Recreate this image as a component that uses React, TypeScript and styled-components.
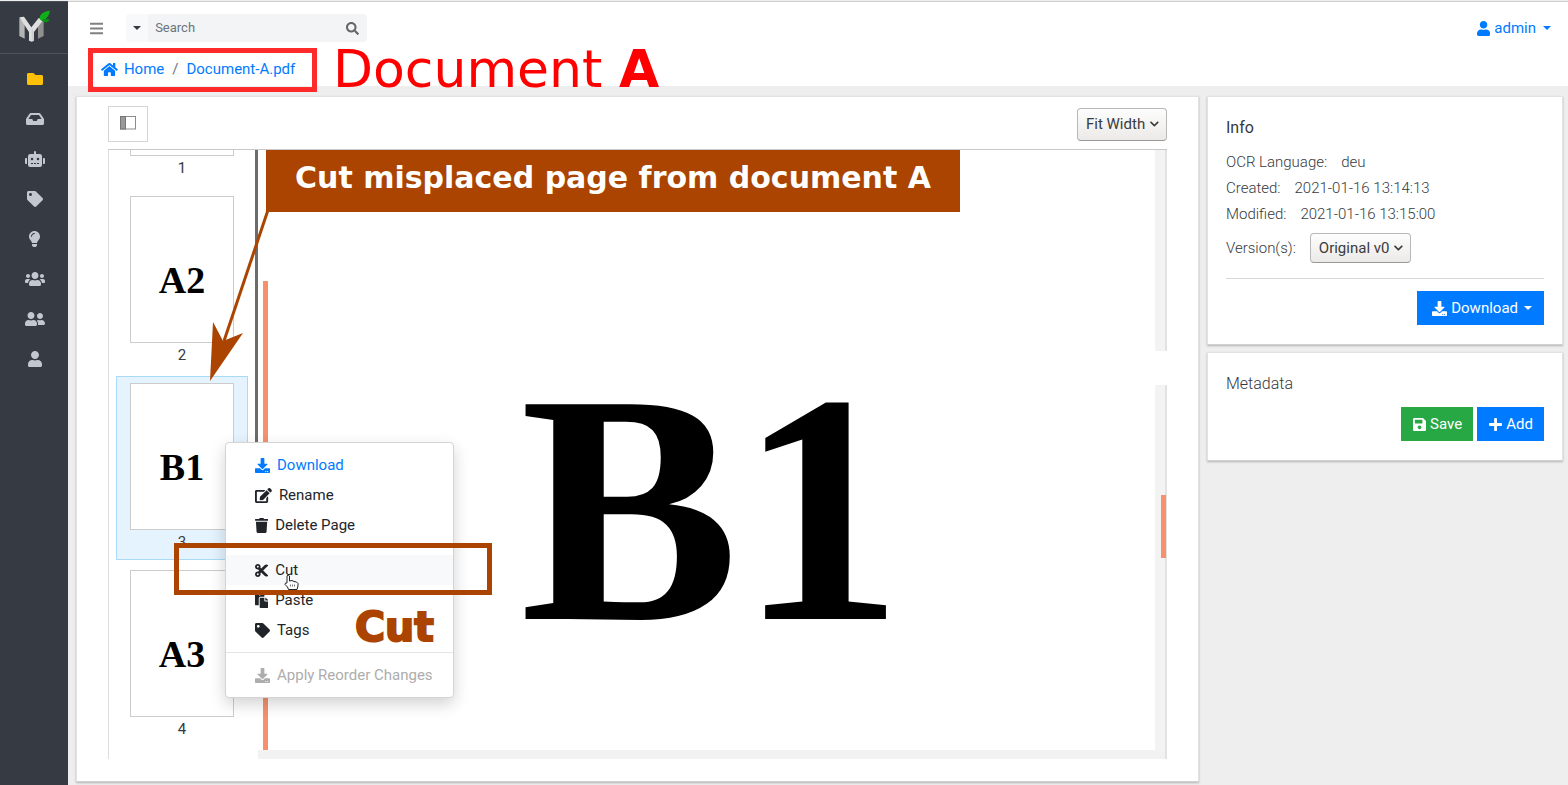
import React from "react";
import styled, { createGlobalStyle, css } from "styled-components";
import {
  FaBars,
  FaChevronDown,
  FaCut,
  FaDownload,
  FaEdit,
  FaFolder,
  FaHome,
  FaInbox,
  FaLightbulb,
  FaPaste,
  FaPlus,
  FaRobot,
  FaSave,
  FaSearch,
  FaTag,
  FaTrash,
  FaUser,
  FaUserFriends,
  FaUsers,
} from "react-icons/fa";

const blue = "#007bff";
const rust = "#aa4400";
const salmon = "#f6916c";

/* Font Awesome glyphs keep their own width-to-height ratio. */
const GlobalStyle = createGlobalStyle`
  *, *::before, *::after { box-sizing: border-box; }
  body {
    margin: 0;
    background: #eee;
    color: #343a40;
    font: 400 15px/24px Roboto, "Liberation Sans", sans-serif;
  }
  button, input, select { font: inherit; color: inherit; }
  button { cursor: pointer; }
  a { color: ${blue}; text-decoration: none; }
  svg { display: block; flex: none; }
  svg[viewBox="0 0 640 512"] { width: 1.25em; }
  svg[viewBox="0 0 576 512"] { width: 1.125em; }
  svg[viewBox="0 0 448 512"] { width: 0.875em; }
  svg[viewBox="0 0 352 512"] { width: 0.6875em; }
`;

const Page = styled.div`
  position: relative;
  display: grid;
  grid-template-columns: 68px minmax(0, 1fr);
  min-height: 100vh;
  border-top: 1px solid #eee;
`;

/* Sidebar */

const Sidebar = styled.aside`
  background: #353a43;
  border-top: 1px solid #4b5058;
`;

const Brand = styled.a`
  display: flex;
  justify-content: center;
  height: 52px;
  padding-top: 8px;
  border-bottom: 1px solid #4d525b;
`;

const SideNav = styled.nav`
  display: flex;
  flex-direction: column;
  padding-top: 5px;
`;

const SideLink = styled.a<{ $active?: boolean }>`
  display: flex;
  align-items: center;
  justify-content: center;
  height: 40px;
  padding-left: 1px;
  color: ${(p) => (p.$active ? "#ffc107" : "#c2c7d0")};
  font-size: 16px;
`;

/* Header */

const Content = styled.div`
  display: flex;
  flex-direction: column;
  min-width: 0;
`;

const Header = styled.header`
  height: 85px;
  padding: 12px 17px 0 22px;
  background: #fff;
  border-top: 1px solid #d0d0d0;
`;

const TopBar = styled.div`
  display: flex;
  align-items: center;
  height: 28px;
`;

const PlainButton = styled.button`
  display: flex;
  align-items: center;
  padding: 0;
  border: 0;
  background: none;
`;

const MenuToggle = styled(PlainButton)`
  margin-right: 23px;
  color: #808080;
`;

const SearchGroup = styled.form`
  display: flex;
  width: 241px;
  height: 28px;
  border-radius: 4px;
  overflow: hidden;
  background: #f2f4f6;
`;

const SearchScope = styled(PlainButton)`
  justify-content: center;
  width: 22px;
  background: #f8f9fa;
`;

const SearchInput = styled.input`
  flex: 1;
  min-width: 0;
  padding: 0 7px;
  border: 0;
  background: none;
  font-size: 13px;
  &::placeholder { color: #6c757d; opacity: 1; }
`;

const SearchButton = styled(PlainButton)`
  padding-right: 8px;
  color: #666;
  font-size: 13px;
`;

const Caret = styled.span`
  border: solid transparent;
  border-width: 4px 4px 0;
  border-top-color: currentColor;
`;

const UserMenu = styled(PlainButton)`
  gap: 4px;
  margin-left: auto;
  color: ${blue};
  ${Caret} { margin-left: 3px; }
`;

const Breadcrumb = styled.nav`
  display: flex;
  align-items: center;
  gap: 8px;
  height: 24px;
  margin: 15px 0 0 11px;
  a { display: flex; align-items: center; gap: 6px; }
`;

const Slash = styled.span`
  color: #6c757d;
`;

/* Cards */

const Columns = styled.main`
  flex: 1;
  display: grid;
  grid-template-columns: minmax(0, 1fr) 356px;
  gap: 8px;
  padding: 10px 5px 3px 8px;
`;

const cardLook = css`
  background: #fff;
  border: 1px solid #e2e2e2;
  border-bottom-color: #d0d0d0;
  box-shadow: 0 1px 2px rgba(0, 0, 0, 0.25);
`;

const ViewerCard = styled.section`
  ${cardLook}
  display: flex;
  flex-direction: column;
  padding: 9px 31px 22px;
`;

const SideCards = styled.div`
  display: flex;
  flex-direction: column;
  gap: 7px;
`;

const Card = styled.section`
  ${cardLook}
  padding: 18px 18px 19px;
`;

/* Viewer */

const ViewerToolbar = styled.div`
  display: flex;
  align-items: center;
  justify-content: space-between;
  height: 36px;
  margin-bottom: 7px;
`;

const PanelToggle = styled.button`
  display: flex;
  align-items: center;
  justify-content: center;
  width: 40px;
  height: 36px;
  padding: 0 0 3px;
  background: #fff;
  border: 1px solid #d5d5d5;
`;

const SelectBox = styled.span<{ $height: number }>`
  display: inline-grid;
  align-items: center;
  height: ${(p) => p.$height}px;
  border: 1px solid #b8b8b8;
  border-bottom-color: #999;
  border-radius: 4px;
  background: linear-gradient(#fdfdfd, #eceae8);
  color: #3b3b3b;
  select, svg { grid-area: 1 / 1; }
  select {
    height: 100%;
    padding: 0 20px 0 8px;
    border: 0;
    background: none;
    appearance: none;
  }
  svg {
    justify-self: end;
    margin-right: 7px;
    font-size: 10px;
    pointer-events: none;
  }
`;

const Viewer = styled.div`
  flex: 1;
  display: flex;
  height: 610px;
  border-left: 1px solid #ddd;
  border-top: 1px solid #c8c8c8;
  overflow: hidden;
`;

const ThumbPane = styled.div`
  width: 146px;
  height: 609px;
  overflow: hidden;
`;

const ThumbList = styled.ol`
  display: flex;
  flex-direction: column;
  gap: 3px;
  margin: -148px 0 0 7px;
  padding: 0;
  list-style: none;
`;

const ThumbItem = styled.li<{ $selected?: boolean }>`
  display: flex;
  flex-direction: column;
  align-items: center;
  width: 132px;
  height: 184px;
  padding-top: 6px;
  border: 1px solid ${(p) => (p.$selected ? "#a8dbf8" : "transparent")};
  background: ${(p) => (p.$selected ? "#e5f3fe" : "none")};
`;

const ThumbPage = styled.div`
  width: 104px;
  height: 147px;
  padding-top: 64px;
  background: #fff;
  border: 1px solid #ccc;
  color: #000;
  font: 700 38px/38px "Liberation Serif", serif;
  text-align: center;
`;

const Splitter = styled.div`
  width: 3px;
  height: 420px;
  background: #6c6c6c;
`;

const Stage = styled.div`
  flex: 1;
  display: flex;
  flex-direction: column;
  min-width: 0;
`;

const StageRow = styled.div`
  flex: 1;
  display: flex;
  min-height: 0;
`;

const PageMarker = styled.div`
  width: 5px;
  margin: 131px 0 0 5px;
  background: ${salmon};
`;

const DocumentPage = styled.div`
  flex: 1;
  padding-top: 195px;
  color: #000;
  font: 700 328px/328px "Liberation Serif", serif;
  text-align: center;
`;

const VerticalScroll = styled.div`
  display: flex;
  flex-direction: column;
  gap: 34px;
  width: 12px;
`;

const Track = styled.div<{ $length?: number }>`
  flex: ${(p) => (p.$length ? `0 0 ${p.$length}px` : "1")};
  background: #f3f3f3;
  border-right: 2px solid #e2e2e2;
`;

const TrackThumb = styled.div`
  width: 5px;
  height: 63px;
  margin: 110px 0 0 6px;
  background: ${salmon};
`;

const HorizontalScroll = styled.div`
  height: 9px;
  background: #f2f2f2;
  border-right: 2px solid #e2e2e2;
`;

/* Info cards */

const CardTitle = styled.h2<{ $light?: boolean }>`
  margin: 0 0 ${(p) => (p.$light ? 10 : 8)}px;
  font-size: 16px;
  line-height: 26px;
  font-weight: ${(p) => (p.$light ? 300 : 400)};
`;

const Facts = styled.dl`
  margin: 0;
  font-weight: 300;
  line-height: 26px;
`;

const Fact = styled.div`
  display: flex;
  gap: 14px;
  dd { margin: 0; }
`;

const VersionRow = styled.div`
  display: flex;
  align-items: center;
  gap: 14px;
  margin-top: 6px;
  padding-bottom: 15px;
  border-bottom: 1px solid #d8d8d8;
  label { font-weight: 300; }
`;

const Actions = styled.div<{ $spaced?: boolean }>`
  display: flex;
  justify-content: flex-end;
  gap: 4px;
  margin-top: ${(p) => (p.$spaced ? 12 : 0)}px;
`;

const ActionButton = styled.button<{ $tone: string; $wide?: boolean }>`
  display: flex;
  align-items: center;
  gap: 4px;
  height: 34px;
  padding: 0 ${(p) => (p.$wide ? 12 : 11)}px 0 ${(p) => (p.$wide ? 15 : 12)}px;
  border: 0;
  background: ${(p) => p.$tone};
  color: #fff;
  ${Caret} { margin-left: 2px; }
`;

/* Context menu */

const ContextMenu = styled.div`
  position: absolute;
  left: 225px;
  top: 441px;
  width: 229px;
  padding: 7px 0;
  background: #fff;
  border: 1px solid #d4d4d4;
  border-radius: 4px;
  box-shadow: 0 6px 16px rgba(0, 0, 0, 0.18);
`;

const MenuItem = styled.button<{ $tone?: "primary" | "hover" }>`
  display: flex;
  align-items: center;
  gap: 7px;
  width: 100%;
  height: 30px;
  padding: 0 0 0 29px;
  border: 0;
  background: ${(p) => (p.$tone === "hover" ? "#f8f9fa" : "none")};
  color: ${(p) => (p.$tone === "primary" ? blue : "#212529")};
  white-space: nowrap;
  &:disabled { color: #adadad; }
`;

const MenuDivider = styled.hr`
  height: 1px;
  margin: 7px 0;
  border: 0;
  background: #e4e4e4;
`;

/* Annotations drawn over the page */

const Frame = styled.div<{ $color: string }>`
  position: absolute;
  border: 5px solid ${(p) => p.$color};
  pointer-events: none;
`;

const BreadcrumbFrame = styled(Frame)`
  left: 88px;
  top: 47px;
  width: 229px;
  height: 44px;
`;

const CutFrame = styled(Frame)`
  left: 174px;
  top: 542px;
  width: 318px;
  height: 52px;
`;

const DocumentNote = styled.div`
  position: absolute;
  left: 333px;
  top: 38px;
  color: #f00;
  font: 400 52px/60px "DejaVu Sans", sans-serif;
  white-space: nowrap;
`;

const Callout = styled.div`
  position: absolute;
  left: 266px;
  top: 149px;
  width: 694px;
  height: 62px;
  background: ${rust};
  color: #fff;
  font: 700 30px/56px "DejaVu Sans", sans-serif;
  text-align: center;
  white-space: nowrap;
`;

const Arrow = styled.svg`
  position: absolute;
  left: 200px;
  top: 209px;
  pointer-events: none;
`;

const CutNote = styled.div`
  position: absolute;
  left: 355px;
  top: 602px;
  color: ${rust};
  font: 700 41px/48px "DejaVu Sans", sans-serif;
  -webkit-text-stroke: 2px ${rust};
`;

const Pointer = styled.svg`
  position: absolute;
  left: 283px;
  top: 572px;
  pointer-events: none;
`;

const Logo = () => (
  <svg width="32" height="32" viewBox="0 0 96 96" aria-hidden="true">
    <path d="M4 24 20 38V86L4 78Z" fill="#b4b4b4" />
    <path d="M60 38 77 30V78L60 86Z" fill="#8f8f8f" />
    <path d="M4 22 18 20 40 52 62 24 76 30 48 66V92L41 95 33 92V66Z" fill="#dedede" />
    <path d="M41 52 48 66V92L41 95Z" fill="#c4c4c4" opacity=".6" />
    <path d="M96 2C78 4 65 11 65 24Q65 29 69 31C79 30 92 24 96 2Z" fill="#0fae1a" />
    <path d="M69 31Q84 24 96 30Q84 44 69 31Z" fill="#079311" />
  </svg>
);

const PanelIcon = () => (
  <svg width="16" height="14" viewBox="0 0 16 14" aria-hidden="true">
    <rect x="0.5" y="0.5" width="15" height="12.5" fill="#fff" stroke="#8c8c8c" />
    <rect x="0.5" y="0.5" width="5" height="12.5" fill="#999" stroke="#777" />
  </svg>
);

const sideLinks = [
  { label: "Folders", icon: <FaFolder /> },
  { label: "Inbox", icon: <FaInbox /> },
  { label: "Automation", icon: <FaRobot /> },
  { label: "Tags", icon: <FaTag /> },
  { label: "Hints", icon: <FaLightbulb /> },
  { label: "Groups", icon: <FaUsers /> },
  { label: "Roles", icon: <FaUserFriends /> },
  { label: "User", icon: <FaUser /> },
];

const thumbs = ["A1", "A2", "B1", "A3"];

export default function App() {
  return (
    <>
      <GlobalStyle />
      <Page>
        <Sidebar>
          <Brand href="#" aria-label="Start page">
            <Logo />
          </Brand>
          <SideNav>
            {sideLinks.map((link, i) => (
              <SideLink key={link.label} href="#" aria-label={link.label} $active={i === 0}>
                {link.icon}
              </SideLink>
            ))}
          </SideNav>
        </Sidebar>

        <Content>
          <Header>
            <TopBar>
              <MenuToggle aria-label="Toggle menu">
                <FaBars />
              </MenuToggle>
              <SearchGroup onSubmit={(e) => e.preventDefault()}>
                <SearchScope type="button" aria-label="Search options">
                  <Caret />
                </SearchScope>
                <SearchInput type="text" placeholder="Search" aria-label="Search" />
                <SearchButton type="submit" aria-label="Submit search">
                  <FaSearch />
                </SearchButton>
              </SearchGroup>
              <UserMenu>
                <FaUser />
                admin
                <Caret />
              </UserMenu>
            </TopBar>
            <Breadcrumb aria-label="Breadcrumb">
              <a href="#">
                <FaHome />
                Home
              </a>
              <Slash>/</Slash>
              <a href="#">Document-A.pdf</a>
            </Breadcrumb>
          </Header>

          <Columns>
            <ViewerCard>
              <ViewerToolbar>
                <PanelToggle aria-label="Toggle thumbnails">
                  <PanelIcon />
                </PanelToggle>
                <SelectBox $height={33}>
                  <select aria-label="Zoom">
                    <option>Fit Width</option>
                  </select>
                  <FaChevronDown />
                </SelectBox>
              </ViewerToolbar>
              <Viewer>
                <ThumbPane>
                  <ThumbList>
                    {thumbs.map((name, i) => (
                      <ThumbItem key={name} $selected={name === "B1"}>
                        <ThumbPage>{name}</ThumbPage>
                        {i + 1}
                      </ThumbItem>
                    ))}
                  </ThumbList>
                </ThumbPane>
                <Splitter />
                <Stage>
                  <StageRow>
                    <PageMarker />
                    <DocumentPage>B1</DocumentPage>
                    <VerticalScroll>
                      <Track $length={201} />
                      <Track>
                        <TrackThumb />
                      </Track>
                    </VerticalScroll>
                  </StageRow>
                  <HorizontalScroll />
                </Stage>
              </Viewer>
            </ViewerCard>

            <SideCards>
              <Card>
                <CardTitle>Info</CardTitle>
                <Facts>
                  <Fact>
                    <dt>OCR Language:</dt>
                    <dd>deu</dd>
                  </Fact>
                  <Fact>
                    <dt>Created:</dt>
                    <dd>2021-01-16 13:14:13</dd>
                  </Fact>
                  <Fact>
                    <dt>Modified:</dt>
                    <dd>2021-01-16 13:15:00</dd>
                  </Fact>
                </Facts>
                <VersionRow>
                  <label htmlFor="version">Version(s):</label>
                  <SelectBox $height={30}>
                    <select id="version">
                      <option>Original v0</option>
                    </select>
                    <FaChevronDown />
                  </SelectBox>
                </VersionRow>
                <Actions $spaced>
                  <ActionButton $tone={blue} $wide>
                    <FaDownload />
                    Download
                    <Caret />
                  </ActionButton>
                </Actions>
              </Card>
              <Card>
                <CardTitle $light>Metadata</CardTitle>
                <Actions>
                  <ActionButton $tone="#28a745">
                    <FaSave />
                    Save
                  </ActionButton>
                  <ActionButton $tone={blue}>
                    <FaPlus />
                    Add
                  </ActionButton>
                </Actions>
              </Card>
            </SideCards>
          </Columns>
        </Content>

        <ContextMenu role="menu">
          <MenuItem role="menuitem" $tone="primary">
            <FaDownload />
            Download
          </MenuItem>
          <MenuItem role="menuitem">
            <FaEdit />
            Rename
          </MenuItem>
          <MenuItem role="menuitem">
            <FaTrash />
            Delete Page
          </MenuItem>
          <MenuDivider />
          <MenuItem role="menuitem" $tone="hover">
            <FaCut />
            Cut
          </MenuItem>
          <MenuItem role="menuitem">
            <FaPaste />
            Paste
          </MenuItem>
          <MenuItem role="menuitem">
            <FaTag />
            Tags
          </MenuItem>
          <MenuDivider />
          <MenuItem role="menuitem" disabled>
            <FaDownload />
            Apply Reorder Changes
          </MenuItem>
        </ContextMenu>

        <BreadcrumbFrame $color="#ff2a2a" />
        <DocumentNote>
          Document <b>A</b>
        </DocumentNote>
        <Callout>Cut misplaced page from document A</Callout>
        <Arrow width="72" height="172" viewBox="0 0 72 172" aria-hidden="true">
          <path d="M68 0 24 131" fill="none" stroke={rust} strokeWidth="3" />
          <path d="M10 171 13 112 23 131 43 123Z" fill={rust} />
        </Arrow>
        <CutFrame $color={rust} />
        <CutNote>Cut</CutNote>
        <Pointer width="16" height="18" viewBox="0 0 16 18" aria-hidden="true">
          <path
            d="M4 10V3Q5 1 6.500 3V8L9 7.500 11 8.500 13.500 9 15 10.500V13L14 16.500H5.500L4.500 14 2 11.500Q2 9.500 4 10Z"
            fill="#fff"
            stroke="#222"
          />
          <path d="M7.500 11.500v2M9.500 11.500v2M11.500 11.500v2" stroke="#777" />
        </Pointer>
      </Page>
    </>
  );
}
